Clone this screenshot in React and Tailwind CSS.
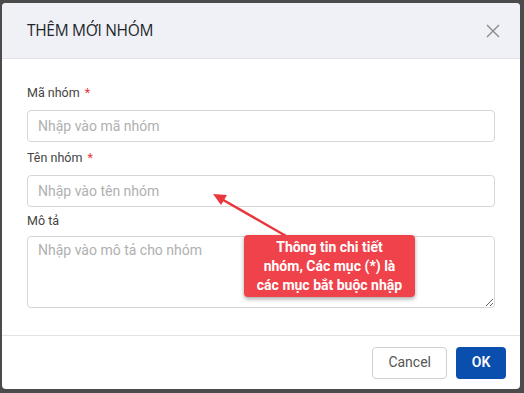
export default function App() {
  return (
    <div className="w-[524px] h-[393px] bg-[#4b4b4b] pt-[3px] pl-[2px]" style={{ fontFamily: 'Roboto, "Noto Sans", sans-serif' }}>
      <div className="relative w-[518px] h-[386px] bg-white rounded-[4px] flex flex-col overflow-hidden">
        <div className="h-[56px] bg-[#f0f1f6] border-b border-[#e3e4e8] flex items-center justify-between pl-[25px] pr-[20px] shrink-0">
          <h2 className="text-[15.5px] text-[#212529] tracking-[-0.3px]" style={{ fontFamily: '"Open Sans", sans-serif' }}>THÊM MỚI NHÓM</h2>
          <svg width="14" height="14" viewBox="0 0 14 14" className="text-[#8a8a8a]">
            <path d="M1 1L13 13M13 1L1 13" stroke="currentColor" strokeWidth="1.4" />
          </svg>
        </div>

        <div className="flex-1 px-[25px] pt-[26px]">
          <label className="block text-[12.5px] text-[#444] leading-[16px]">
            Mã nhóm <span className="text-[#e53935] ml-[2px]">*</span>
          </label>
          <input
            className="mt-[9px] w-full h-[32px] border border-[#d6d6d6] rounded-[4px] px-[10px] text-[14px] placeholder:text-[#b0b0b0] outline-none"
            placeholder="Nhập vào mã nhóm"
          />
          <label className="block mt-[8px] text-[12.5px] text-[#444] leading-[16px]">
            Tên nhóm <span className="text-[#e53935] ml-[2px]">*</span>
          </label>
          <input
            className="mt-[9px] w-full h-[32px] border border-[#d6d6d6] rounded-[4px] px-[10px] text-[14px] placeholder:text-[#b0b0b0] outline-none"
            placeholder="Nhập vào tên nhóm"
          />
          <label className="block mt-[6px] text-[12.5px] text-[#444] leading-[16px]">Mô tả</label>
          <textarea
            className="mt-[7px] block w-full h-[72px] border border-[#d6d6d6] rounded-[4px] px-[10px] py-[3px] text-[14px] placeholder:text-[#b0b0b0] outline-none resize-y"
            placeholder="Nhập vào mô tả cho nhóm"
          />
        </div>

        <div className="h-[54px] border-t border-[#e3e3e3] flex items-center justify-end gap-[9px] pr-[14px] shrink-0">
          <button className="h-[32px] px-[15px] border border-[#d0d0d0] rounded-[4px] text-[14px] text-[#555] bg-white">Cancel</button>
          <button className="h-[32px] w-[50px] rounded-[4px] text-[14px] font-semibold text-white bg-[#0a4fae]">OK</button>
        </div>

        <svg className="absolute left-0 top-0 pointer-events-none" width="518" height="386">
          <line x1="216" y1="194" x2="284" y2="233" stroke="#e8383e" strokeWidth="2.5" />
          <polygon points="211,191 225,192 219,202" fill="#e8383e" />
        </svg>
        <div className="absolute left-[242px] top-[232px] w-[171px] h-[62px] bg-[#f0424a] rounded-[4px] shadow-[0_2px_4px_rgba(0,0,0,0.35)] flex items-center justify-center text-center text-white font-bold text-[14px] leading-[19px]">
          Thông tin chi tiết<br />nhóm, Các mục (*) là<br />các mục bắt buộc nhập
        </div>
      </div>
    </div>
  );
}
